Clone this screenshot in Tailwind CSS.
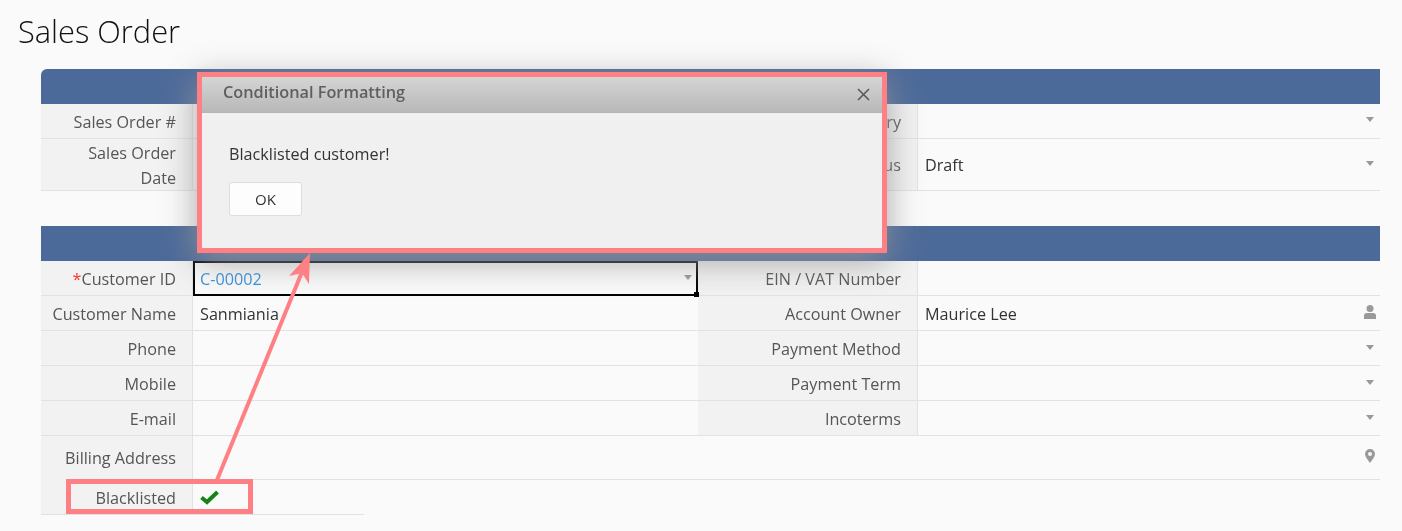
<!DOCTYPE html>
<html lang="en">

<head>
  <meta charset="UTF-8">
  <title>Sales Order</title>
  <script src="https://cdn.jsdelivr.net/npm/@tailwindcss/browser@4"></script>
</head>

<body class="relative h-[531px] w-[1402px] overflow-hidden bg-[#fafafa] font-['Open_Sans',sans-serif] text-[16.2px] text-[#333] will-change-transform">
  <h1 class="pl-[18px] pt-[9px] h-[69px] text-[30.8px] leading-[44px] font-light text-[#111]">Sales Order</h1>

  <div class="ml-[41px] w-[1339px]">
    <!-- first section -->
    <div class="h-[35px] rounded-tl-md bg-[#4c6a99]"></div>
    <div class="grid grid-cols-[152px_505px_220px_462px] grid-rows-[35px_52px]">
      <div class="border-r border-b border-[#e2e2e2] bg-[#f2f2f2] pr-[16px] text-right leading-[37px] text-[#555]">Sales Order #</div>
      <div class="border-b border-[#e2e2e2]"></div>
      <div class="border-r border-b border-[#e2e2e2] bg-[#f2f2f2] pr-[16px] text-right leading-[37px] text-[#555]">Sales Order Category</div>
      <div class="flex justify-end border-b border-[#e2e2e2] pr-[6px] pt-[13px]">
        <svg width="8" height="5" viewBox="0 0 8 5"><path d="M0 0h8L4 5z" fill="#999"/></svg>
      </div>
      <div class="border-r border-b border-[#e2e2e2] bg-[#f2f2f2] pr-[16px] pt-[2px] text-right leading-[25px] text-[#555]">Sales Order<br>Date</div>
      <div class="border-b border-[#e2e2e2]"></div>
      <div class="border-r border-b border-[#e2e2e2] bg-[#f2f2f2] pr-[16px] text-right leading-[53px] text-[#555]">Status</div>
      <div class="flex justify-between border-b border-[#e2e2e2] pl-[7px] pr-[6px] leading-[53px]">
        <span>Draft</span>
        <svg class="mt-[22px]" width="8" height="5" viewBox="0 0 8 5"><path d="M0 0h8L4 5z" fill="#999"/></svg>
      </div>
    </div>

    <!-- second section -->
    <div class="mt-[35px] h-[35px] bg-[#4c6a99]"></div>
    <div class="grid grid-cols-[152px_505px_220px_462px] auto-rows-[35px]">
      <div class="border-r border-b border-[#e2e2e2] bg-[#f2f2f2] pr-[16px] text-right leading-[37px] text-[#555]"><span class="text-[#f33]">*</span>Customer ID</div>
      <div class="relative flex justify-between border-2 border-black pl-[5px] pr-[4px] leading-[33px] text-[#3490dc]">
        <span>C-00002</span>
        <svg class="mt-[12px]" width="8" height="5" viewBox="0 0 8 5"><path d="M0 0h8L4 5z" fill="#999"/></svg>
        <span class="absolute -right-[3px] -bottom-[3px] h-[5px] w-[5px] bg-black"></span>
      </div>
      <div class="border-r border-b border-[#e2e2e2] bg-[#f2f2f2] pr-[16px] text-right leading-[37px] text-[#555]">EIN / VAT Number</div>
      <div class="border-b border-[#e2e2e2]"></div>

      <div class="border-r border-b border-[#e2e2e2] bg-[#f2f2f2] pr-[16px] text-right leading-[37px] text-[#555]">Customer Name</div>
      <div class="border-b border-[#e2e2e2] pl-[7px] leading-[37px]">Sanmiania</div>
      <div class="border-r border-b border-[#e2e2e2] bg-[#f2f2f2] pr-[16px] text-right leading-[37px] text-[#555]">Account Owner</div>
      <div class="flex justify-between border-b border-[#e2e2e2] pl-[7px] pr-[4px] leading-[37px]">
        <span>Maurice Lee</span>
        <svg class="mt-[9px]" width="12" height="14" viewBox="0 0 12 14"><circle cx="6" cy="3.500" r="3.500" fill="#999"/><path d="M0 14V10.500Q0 8 3 8h6q3 0 3 2.500V14z" fill="#999"/></svg>
      </div>

      <div class="border-r border-b border-[#e2e2e2] bg-[#f2f2f2] pr-[16px] text-right leading-[37px] text-[#555]">Phone</div>
      <div class="border-b border-[#e2e2e2]"></div>
      <div class="border-r border-b border-[#e2e2e2] bg-[#f2f2f2] pr-[16px] text-right leading-[37px] text-[#555]">Payment Method</div>
      <div class="flex justify-end border-b border-[#e2e2e2] pr-[6px] pt-[14px]">
        <svg width="8" height="5" viewBox="0 0 8 5"><path d="M0 0h8L4 5z" fill="#999"/></svg>
      </div>

      <div class="border-r border-b border-[#e2e2e2] bg-[#f2f2f2] pr-[16px] text-right leading-[37px] text-[#555]">Mobile</div>
      <div class="border-b border-[#e2e2e2]"></div>
      <div class="border-r border-b border-[#e2e2e2] bg-[#f2f2f2] pr-[16px] text-right leading-[37px] text-[#555]">Payment Term</div>
      <div class="flex justify-end border-b border-[#e2e2e2] pr-[6px] pt-[14px]">
        <svg width="8" height="5" viewBox="0 0 8 5"><path d="M0 0h8L4 5z" fill="#999"/></svg>
      </div>

      <div class="border-r border-b border-[#e2e2e2] bg-[#f2f2f2] pr-[16px] text-right leading-[37px] text-[#555]">E-mail</div>
      <div class="border-b border-[#e2e2e2]"></div>
      <div class="border-r border-b border-[#e2e2e2] bg-[#f2f2f2] pr-[16px] text-right leading-[37px] text-[#555]">Incoterms</div>
      <div class="flex justify-end border-b border-[#e2e2e2] pr-[6px] pt-[14px]">
        <svg width="8" height="5" viewBox="0 0 8 5"><path d="M0 0h8L4 5z" fill="#999"/></svg>
      </div>
    </div>

    <div class="grid h-[44px] grid-cols-[152px_1187px] border-b border-[#e2e2e2]">
      <div class="border-r border-[#e2e2e2] bg-[#f2f2f2] pr-[16px] text-right leading-[44px] text-[#555]">Billing Address</div>
      <div class="flex justify-end pr-[5px] pt-[13px]">
        <svg width="10" height="14" viewBox="0 0 10 14"><path fill-rule="evenodd" d="M5 0a5 5 0 0 1 5 5c0 3-3 6-5 9-2-3-5-6-5-9a5 5 0 0 1 5-5zm0 3a2 2 0 1 0 0 4 2 2 0 0 0 0-4z" fill="#999"/></svg>
      </div>
    </div>

    <div class="grid h-[35px] w-[323px] grid-cols-[152px_171px] grid-rows-[34px] border-b border-[#e2e2e2]">
      <div class="border-r border-[#e2e2e2] bg-[#f2f2f2] pr-[16px] text-right leading-[37px] text-[#555]">Blacklisted</div>
      <div class="pl-[7px] pt-[10px]">
        <svg width="20" height="15" viewBox="0 0 20 15"><path d="M1.500 7.500L7 12L17.500 2" fill="none" stroke="#158415" stroke-width="4"/></svg>
      </div>
    </div>
  </div>

  <!-- annotations and dialog lie over the form -->
  <div class="absolute left-[197px] top-[72px] h-[181px] w-[690px] border-[5px] border-[#ff8084] bg-[#f0f0f0] shadow-[0_8px_32px_rgba(150,150,150,0.85)]">
    <div class="relative h-[36px] border-b border-[#b5b5b5] bg-linear-to-b from-[#d5d5d5] to-[#b8b8b8] pl-[21px] text-[16.3px] leading-[30px] font-semibold text-[#5f5f5f]">
      Conditional Formatting
      <svg class="absolute right-[12px] top-[11px]" width="13" height="13" viewBox="0 0 13 13"><path d="M1 1l11 11M12 1L1 12" stroke="#555" stroke-width="1.500"/></svg>
    </div>
    <p class="pl-[27px] pt-[29px] leading-[24px] text-[#333]">Blacklisted customer!</p>
    <button class="ml-[27px] mt-[16px] h-[34px] w-[73px] rounded-[3px] border border-[#ddd] bg-[#fdfdfd] text-[15px] text-[#333]">OK</button>
  </div>

  <div class="absolute left-[66px] top-[479px] h-[35px] w-[187px] border-[5px] border-[#ff8084]"></div>

  <svg class="absolute left-0 top-0" width="1402" height="531" viewBox="0 0 1402 531">
    <path d="M217 480L302 272" stroke="#ff8084" stroke-width="4" fill="none"/>
    <path d="M310 253L309 284L302 273L289 276z" fill="#ff8084"/>
  </svg>
</body>

</html>
